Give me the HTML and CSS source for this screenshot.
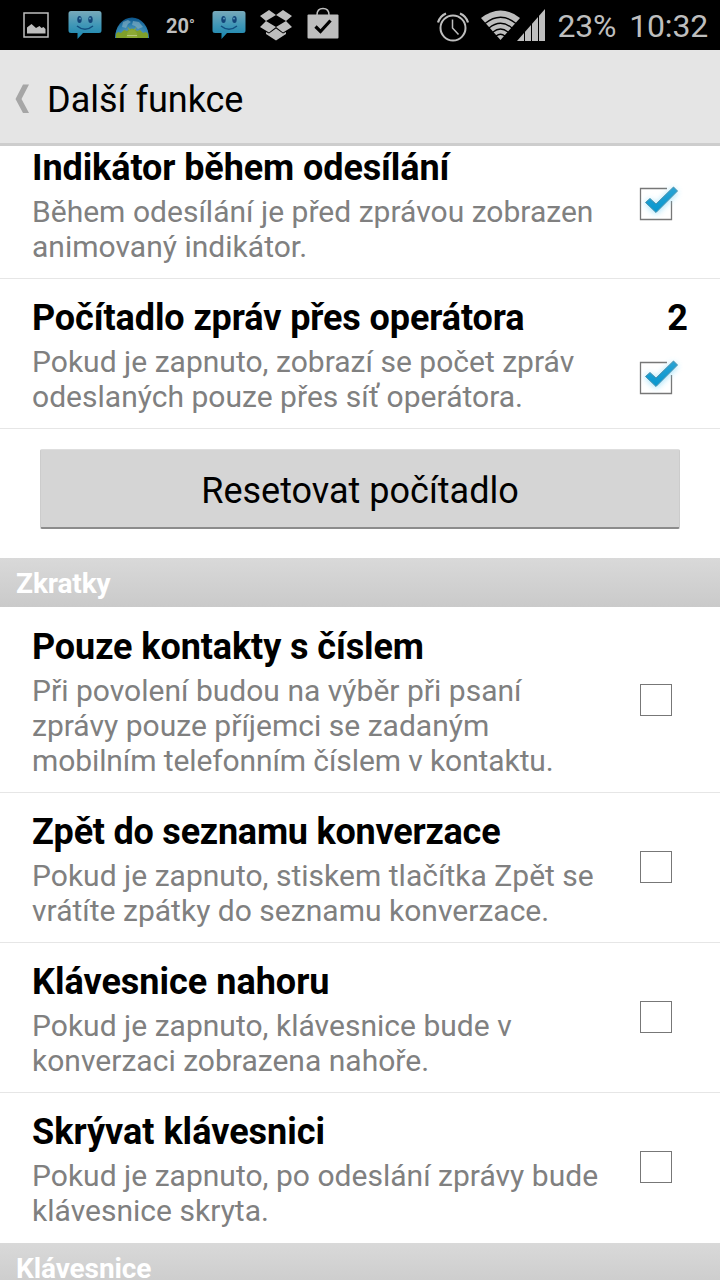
FILE: index.html
```
<!DOCTYPE html>
<html lang="cs">
<head>
    <meta charset="UTF-8">
    <meta name="viewport" content="width=device-width, initial-scale=1.0">
    <title>Další funkce</title>
    <link rel="stylesheet" href="styles.css">
</head>
<body>
    <svg class="defs" width="0" height="0">
        <defs>
            <linearGradient id="bubble-fill" x1="0" y1="0" x2="0" y2="1">
                <stop offset="0" stop-color="#78a9ba"/>
                <stop offset="0.5" stop-color="#4097b7"/>
                <stop offset="1" stop-color="#1785ae"/>
            </linearGradient>
            <linearGradient id="tick-fill" x1="0" y1="0" x2="0" y2="1">
                <stop offset="0" stop-color="#2ba3d4"/>
                <stop offset="1" stop-color="#0597cf"/>
            </linearGradient>
            <radialGradient id="globe-fill" cx="0.5" cy="0.9" r="0.9">
                <stop offset="0" stop-color="#7fa9be"/>
                <stop offset="0.6" stop-color="#2a7fae"/>
                <stop offset="1" stop-color="#0b5389"/>
            </radialGradient>
            <filter id="glow" x="-50%" y="-50%" width="200%" height="200%">
                <feGaussianBlur stdDeviation="3"/>
            </filter>
        </defs>
        <symbol id="bubble" viewBox="0 0 34 30">
            <path d="M3 1h28a2.500 2.500 0 0 1 2.500 2.500v17a2.500 2.500 0 0 1-2.500 2.500H15l-5.500 6V23H3a2.500 2.500 0 0 1-2.500-2.500v-17A2.500 2.500 0 0 1 3 1z" fill="url(#bubble-fill)"/>
            <ellipse cx="11.500" cy="9.500" rx="2.200" ry="3.600" fill="#134579"/>
            <ellipse cx="22.500" cy="9.500" rx="2.200" ry="3.600" fill="#134579"/>
            <circle cx="12" cy="8.500" r="0.900" fill="#5fa4c4"/>
            <circle cx="22" cy="8.500" r="0.900" fill="#5fa4c4"/>
            <path d="M9 16q8 6.500 16 0" fill="none" stroke="#134f80" stroke-width="1.500"/>
        </symbol>
        <symbol id="tick" viewBox="0 0 60 60">
            <path d="M41 14.500H14.500v31h31V27" fill="none" stroke="#777" stroke-width="1.300"/>
            <path d="M19 29l5-4 6 6 17-17 4.500 4.500L30 40z" fill="#7fd6f7" opacity="0.800" filter="url(#glow)"/>
            <path d="M19.500 28.500l4.500-4 6 5.500 17.500-17 4 4L30 38.500z" fill="url(#tick-fill)" stroke="#4d92ad" stroke-width="1"/>
        </symbol>
    </svg>

    <div class="statusbar">
        <div class="notifications">
            <svg width="26" height="26" viewBox="0 0 26 26">
                <rect x="1" y="1" width="24" height="24" fill="none" stroke="#bebebe" stroke-width="1.500"/>
                <path d="M4 21.500v-6l4.500-3.500 4.500 4 3.500-2 2 2 2-1 2 2v4.500z" fill="#bebebe"/>
            </svg>
            <svg class="bubble" width="34" height="30"><use href="#bubble"/></svg>
            <svg class="globe" width="34" height="21" viewBox="0 0 34 21">
                <path d="M0 21a17 20.500 0 0 1 34 0z" fill="url(#globe-fill)"/>
                <path d="M8 5l5-2 3 2-3 2-2 4-4-1zM18 4l6 1 4 5-5 2-3-3-3-1z" fill="#8bb4c4" opacity="0.600"/>
                <path d="M1 21v-4l2-2 3 1 3-3 3 1q5-5 10 0l3-1 3 3 3-1 2 2v4z" fill="#7f9f2a"/>
                <path d="M12 21q0-8 5-8t5 8zM13 10.500l2 3M21 10.500l-2 3" fill="#8daa34" stroke="#8daa34"/>
                <path d="M12 18.500h10" stroke="#b6c77d"/>
            </svg>
            <span class="temp">20<sup>°</sup></span>
            <svg class="bubble" width="34" height="30"><use href="#bubble"/></svg>
            <svg class="dropbox" width="34" height="32" viewBox="0 0 34 32">
                <path d="M10 1l7 5-10 6-6-5zM24 1l-7 5 10 6 6-5zM1 18l6-6 10 6-7 5.500zM33 18l-6-6-10 6 7 5.500zM17 19.500l7 5 3-1.500v2L17 31.500 7 25v-2l3 1.500z" fill="#bebebe"/>
            </svg>
            <svg class="bag" width="32" height="32" viewBox="0 0 32 32">
                <path d="M10 8q0-6.500 6-6.500T22 8" fill="none" stroke="#bebebe" stroke-width="1.500"/>
                <rect x="0.500" y="7.500" width="31" height="24" rx="1" fill="#bebebe"/>
                <path d="M8.500 19.500l5 5 10-11" fill="none" stroke="#000" stroke-width="3.200"/>
            </svg>
        </div>
        <div class="system">
            <svg class="alarm" width="32" height="32" viewBox="0 0 32 32" fill="none" stroke="#bebebe">
                <circle cx="16" cy="18" r="12.500" stroke-width="2"/>
                <path d="M15.500 9.500V18l6 6.500" stroke-width="1.500"/>
                <path d="M1 12.500q2-6.500 8-9M31 12.500q-2-6.500-8-9" stroke-width="2.200"/>
            </svg>
            <svg class="wifi" width="39" height="30" viewBox="0 0 39 30">
                <path d="M0 8Q19.500-7 39 8L19.500 30z" fill="#bebebe"/>
                <path d="M4 13.500q15.500-12.500 31 0M8 18q11.500-9.500 23 0M12 22q7.500-6 15 0M15 26q4.500-3.500 9 0" fill="none" stroke="#000" stroke-width="1.300"/>
            </svg>
            <svg class="signal" width="28" height="32" viewBox="0 0 28 32">
                <path d="M0 32L28 0v32z" fill="#bebebe"/>
                <path d="M7.500 20v12M14.500 12v20M21.500 5v27" stroke="#000"/>
            </svg>
            <span class="battery">23%</span>
            <span class="clock">10:32</span>
        </div>
    </div>

    <div class="header">
        <svg width="15" height="30" viewBox="0 0 15 30">
            <path d="M8 0.500h6L6.500 15 14 29H8L0.500 15z" fill="#a6a6a6"/>
        </svg>
        <h1>Další funkce</h1>
    </div>

    <div class="list">
        <div class="row scrolled">
            <div class="text">
                <h2 class="tight">Indikátor během odesílání</h2>
                <p>Během odesílání je před zprávou zobrazen<br>animovaný indikátor.</p>
            </div>
            <svg class="tick" width="60" height="60"><use href="#tick"/></svg>
        </div>
        <div class="row counter">
            <div class="text">
                <h2 class="tight">Počítadlo zpráv přes operátora</h2>
                <p>Pokud je zapnuto, zobrazí se počet zpráv<br>odeslaných pouze přes síť operátora.</p>
            </div>
            <div class="side">
                <span class="count">2</span>
                <svg class="tick" width="60" height="60"><use href="#tick"/></svg>
            </div>
        </div>
        <div class="reset">
            <button type="button">Resetovat počítadlo</button>
        </div>

        <div class="section">Zkratky</div>
        <div class="row">
            <div class="text">
                <h2 class="tight">Pouze kontakty s číslem</h2>
                <p>Při povolení budou na výběr při psaní<br>zprávy pouze příjemci se zadaným<br><span class="tight">mobilním telefonním číslem v kontaktu.</span></p>
            </div>
            <span class="box"></span>
        </div>
        <div class="row">
            <div class="text">
                <h2 class="tighter">Zpět do seznamu konverzace</h2>
                <p>Pokud je zapnuto, stiskem tlačítka Zpět se<br>vrátíte zpátky do seznamu konverzace.</p>
            </div>
            <span class="box"></span>
        </div>
        <div class="row">
            <div class="text">
                <h2>Klávesnice nahoru</h2>
                <p>Pokud je zapnuto, klávesnice bude v<br>konverzaci zobrazena nahoře.</p>
            </div>
            <span class="box"></span>
        </div>
        <div class="row last">
            <div class="text">
                <h2>Skrývat klávesnici</h2>
                <p>Pokud je zapnuto, po odeslání zprávy bude<br>klávesnice skryta.</p>
            </div>
            <span class="box"></span>
        </div>
        <div class="section">Klávesnice</div>
    </div>
</body>
</html>
```
FILE: styles.css
```
* {
    box-sizing: border-box;
}
body {
    margin: 0;
    height: 1280px;
    display: flex;
    flex-direction: column;
    overflow: hidden;
    background-color: #fff;
    font-family: Roboto, sans-serif;
}
svg {
    display: block;
    flex-shrink: 0;
}
.defs {
    position: absolute;
}
h1, h2, p {
    margin: 0;
    font-weight: normal;
    white-space: nowrap;
}

/* status bar */
.statusbar {
    display: flex;
    justify-content: space-between;
    height: 50px;
    flex-shrink: 0;
    padding: 0 12px 0 23px;
    background-color: #000;
    color: #bebebe;
}
.notifications, .system {
    display: flex;
    align-items: center;
}
.notifications .bubble {
    margin-left: 19px;
}
.globe {
    margin: 5px 0 0 13px;
}
.temp {
    width: 31px;
    margin: 2px 0 0 17px;
    font-size: 20px;
    font-weight: bold;
    line-height: 24px;
    white-space: nowrap;
}
.temp sup {
    font-size: 15px;
    line-height: 0;
    vertical-align: 3px;
}
.notifications .temp + .bubble {
    margin-left: 15px;
}
.dropbox {
    margin-left: 13px;
}
.bag {
    margin: -4px 0 0 14px;
}
.alarm {
    margin-top: 1px;
}
.wifi {
    margin-left: 12px;
}
.signal {
    margin-left: -3px;
}
.battery, .clock {
    font-size: 32px;
    line-height: 50px;
    padding-top: 1px;
    letter-spacing: -0.2px;
}
.battery {
    margin-left: 12px;
}
.clock {
    margin-left: 13px;
}

/* title bar */
.header {
    display: flex;
    align-items: center;
    height: 96px;
    flex-shrink: 0;
    padding: 5px 0 0 15px;
    background-color: #e5e5e5;
    border-bottom: 3px solid #cdcdcd;
}
.header h1 {
    margin: 2px 0 0 17px;
    font-size: 36px;
}

/* settings */
.list {
    flex: 1;
    overflow: hidden;
}
.row {
    display: flex;
    align-items: center;
    justify-content: space-between;
    padding: 18px 48px 14px 32px;
    border-bottom: 1px solid #e6e6e6;
}
.row h2 {
    margin-bottom: 5px;
    font-size: 36px;
    font-weight: bold;
    line-height: 42px;
}
.row p {
    color: #808080;
    font-size: 30px;
    line-height: 35px;
    letter-spacing: 0.02px;
}
.row .tight {
    letter-spacing: -0.1px;
}
.row .tighter {
    letter-spacing: -0.23px;
}
.scrolled {
    margin-top: -17px;
}
.last {
    border-color: #fff;
}
.box {
    width: 32px;
    height: 32px;
    border: 1px solid #777;
    margin-top: -5px;
}
.row .tick {
    margin: -18px -14px -14px 0;
}
.counter {
    align-items: flex-start;
}
.side {
    display: flex;
    flex-direction: column;
    align-items: flex-end;
}
.count {
    margin-right: -16px;
    font-size: 36px;
    font-weight: bold;
    line-height: 42px;
}
.side .tick {
    margin-top: 9px;
}
.reset {
    height: 129px;
    padding: 20px 40px 0;
}
.reset button {
    display: block;
    width: 100%;
    height: 80px;
    padding: 4px 0 0;
    border: 1px solid #ccc;
    border-top-color: #dedede;
    border-bottom: 2px solid #8c8c8c;
    border-radius: 2px;
    background-color: #d5d5d5;
    color: #000;
    font-family: inherit;
    font-size: 36px;
}
.section {
    height: 49px;
    margin-bottom: 1px;
    padding-left: 16px;
    background: linear-gradient(#d9d9d9, #cacaca);
    color: #fff;
    font-size: 28px;
    font-weight: bold;
    line-height: 52px;
    letter-spacing: -0.1px;
}
```
